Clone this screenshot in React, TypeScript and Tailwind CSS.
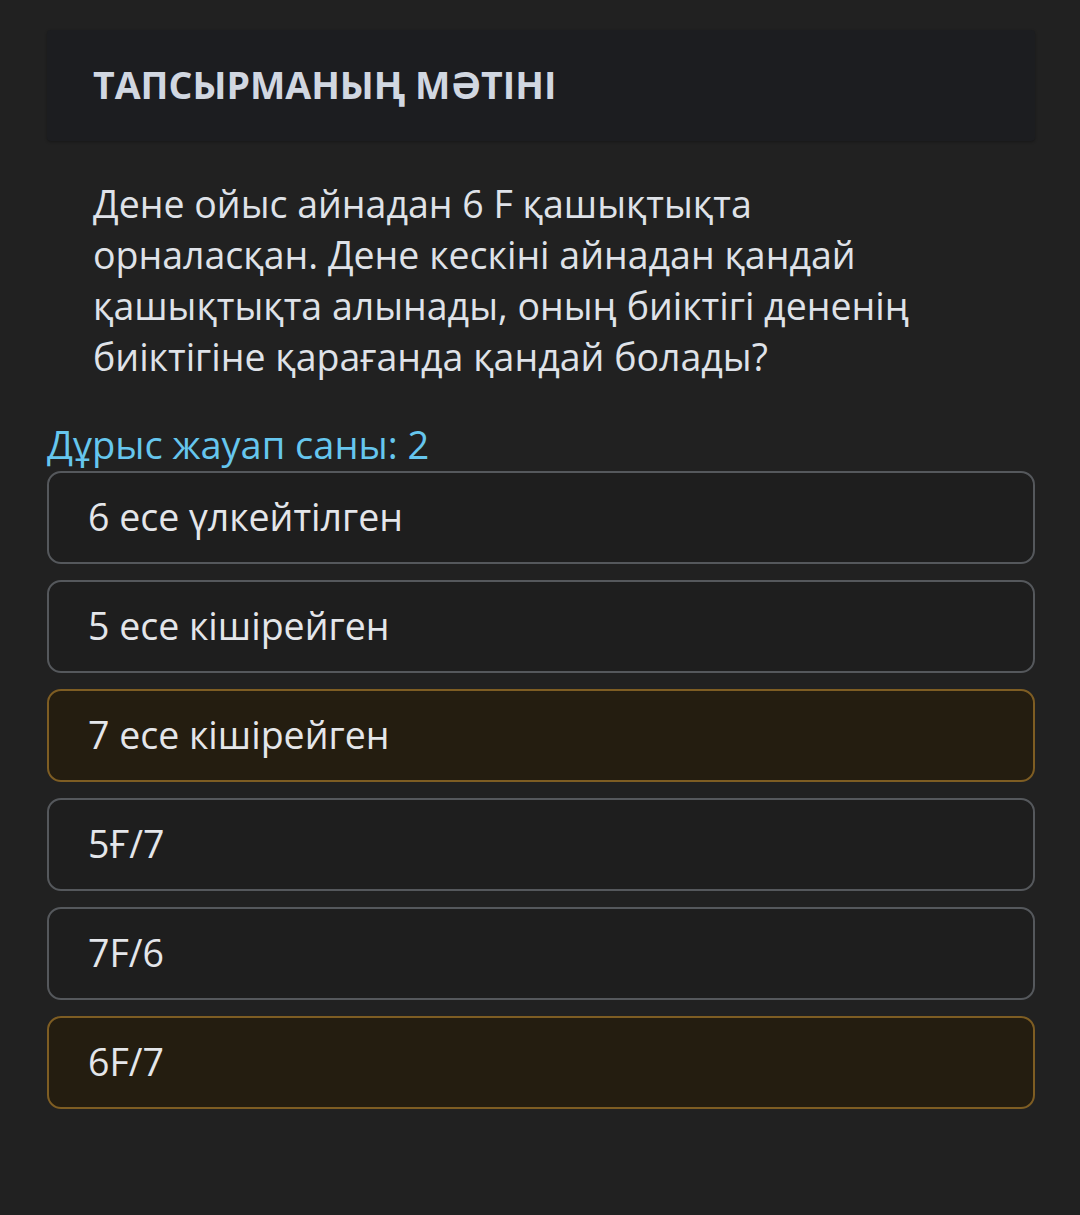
import React from "react";

const options: { text: string; selected: boolean }[] = [
  { text: "6 есе үлкейтілген", selected: false },
  { text: "5 есе кішірейген", selected: false },
  { text: "7 есе кішірейген", selected: true },
  { text: "5Ғ/7", selected: false },
  { text: "7F/6", selected: false },
  { text: "6F/7", selected: true },
];

export default function App() {
  return (
    <div
      className="min-h-[1215px] bg-[#212121] pl-[47px] pr-[45px] pt-[30px]"
      style={{ fontFamily: '"Open Sans", "Noto Sans", sans-serif' }}
    >
      <div className="h-[111px] bg-[#1c1d20] rounded-[4px] flex items-center px-[46px] shadow-[0_1px_3px_rgba(0,0,0,0.3)]">
        <h2 className="text-[37.5px] leading-[44px] font-bold text-[#d1d7e1] -mt-[2px]">
          ТАПСЫРМАНЫҢ МӘТІНІ
        </h2>
      </div>
      <p className="mt-[37px] pl-[46px] pr-[80px] text-[37.5px] leading-[51px] text-[#dfe2e8]">
        Дене ойыс айнадан 6 F қашықтықта орналасқан. Дене кескіні айнадан қандай
        қашықтықта алынады, оның биіктігі дененің биіктігіне қарағанда қандай
        болады?
      </p>
      <div className="mt-[38px] text-[38px] leading-[48px] text-[#66c6ee]">
        Дұрыс жауап саны: 2
      </div>
      <div className="flex flex-col gap-[16px] mt-[3px]">
        {options.map((o) => (
          <div
            key={o.text}
            className={
              o.selected
                ? "h-[93px] rounded-[14px] border-2 border-[#7e5d23] bg-[#241d10] flex items-center px-[39px] text-[37.5px] text-[#e4e6ea]"
                : "h-[93px] rounded-[14px] border-2 border-[#55585c] bg-[#1e1e1e] flex items-center px-[39px] text-[37.5px] text-[#e4e6ea]"
            }
          >
            {o.text}
          </div>
        ))}
      </div>
    </div>
  );
}
